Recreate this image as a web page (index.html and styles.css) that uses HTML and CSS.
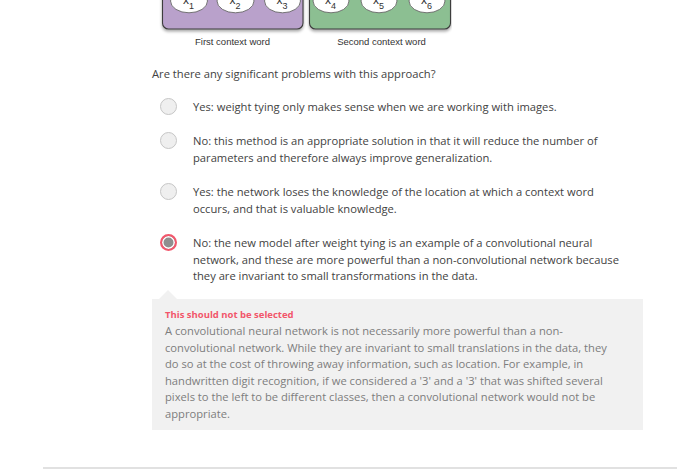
FILE: index.html
```html
<!DOCTYPE html>
<html>
<head>
<meta charset="utf-8">
<link rel="stylesheet" href="styles.css">
</head>
<body>
<div class="page">
  <div class="col">
    <svg class="diagram" width="300" height="50" viewBox="152 0 300 50" xmlns="http://www.w3.org/2000/svg">
      <defs>
        <filter id="sh" x="-10%" y="-20%" width="120%" height="160%">
          <feDropShadow dx="0" dy="2" stdDeviation="1.6" flood-color="#000" flood-opacity="0.35"/>
        </filter>
      </defs>
      <g filter="url(#sh)">
        <rect x="162.5" y="-30" width="140.5" height="59" rx="6" fill="#b9a1cb" stroke="#3d3d3d" stroke-width="1.1"/>
        <rect x="309.5" y="-30" width="141" height="59" rx="6" fill="#8cbf92" stroke="#3d3d3d" stroke-width="1.1"/>
      </g>
      <g fill="#fff" stroke="#666" stroke-width="0.9">
        <ellipse cx="189" cy="1" rx="18.5" ry="11.8"/>
        <ellipse cx="235.5" cy="1" rx="18.5" ry="11.8"/>
        <ellipse cx="282.5" cy="1" rx="18" ry="11.8"/>
        <ellipse cx="331" cy="1" rx="18" ry="11.8"/>
        <ellipse cx="379" cy="1" rx="18" ry="11.8"/>
        <ellipse cx="427" cy="1" rx="18" ry="11.8"/>
      </g>
      <g class="xs" fill="#333">
        <text x="183" y="4">x<tspan dy="5" font-size="9">1</tspan></text>
        <text x="229.5" y="4">x<tspan dy="5" font-size="9">2</tspan></text>
        <text x="276.5" y="4">x<tspan dy="5" font-size="9">3</tspan></text>
        <text x="325" y="4">x<tspan dy="5" font-size="9">4</tspan></text>
        <text x="373" y="4">x<tspan dy="5" font-size="9">5</tspan></text>
        <text x="421" y="4">x<tspan dy="5" font-size="9">6</tspan></text>
      </g>
      <g class="cap" fill="#333" text-anchor="middle">
        <text x="232.5" y="45">First context word</text>
        <text x="381.5" y="45">Second context word</text>
      </g>
    </svg>

    <p class="question">Are there any significant problems with this approach?</p>

    <ul class="options">
      <li class="option"><span class="radio"></span><span class="label">Yes: weight tying only makes sense when we are working with images.</span></li>
      <li class="option"><span class="radio"></span><span class="label">No: this method is an appropriate solution in that it will reduce the number of parameters and therefore always improve generalization.</span></li>
      <li class="option"><span class="radio"></span><span class="label">Yes: the network loses the knowledge of the location at which a context word occurs, and that is valuable knowledge.</span></li>
      <li class="option"><span class="radio radio-wrong"></span><span class="label">No: the new model after weight tying is an example of a convolutional neural network, and these are more powerful than a non-convolutional network because they are invariant to small transformations in the data.</span></li>
    </ul>

    <div class="feedback">
      <div class="fb-title">This should not be selected</div>
      <p class="fb-text">A convolutional neural network is not necessarily more powerful than a non-convolutional network. While they are invariant to small translations in the data, they do so at the cost of throwing away information, such as location. For example, in handwritten digit recognition, if we considered a '3' and a '3' that was shifted several pixels to the left to be different classes, then a convolutional network would not be appropriate.</p>
    </div>
  </div>
  <div class="rule"></div>
</div>
</body>
</html>
```

FILE: styles.css
```css
html, body {
  margin: 0;
  padding: 0;
  background: #fff;
}
body {
  font-family: "Open Sans", "Liberation Sans", sans-serif;
  font-size: 11.2px;
  line-height: 16.5px;
  color: #424242;
  overflow: hidden;
}
.page {
  width: 677px;
  height: 472px;
}
.col {
  margin-left: 152px;
  width: 491px;
}
.diagram {
  display: block;
}
.xs text {
  font-family: "Liberation Sans", Arial, sans-serif;
  font-size: 12px;
}
.cap text {
  font-family: "Liberation Sans", Arial, sans-serif;
  font-size: 9.5px;
}
.question {
  margin: 16px 0 0;
}
.options {
  list-style: none;
  margin: 16px 0 0;
  padding: 0 0 0 8px;
  display: flex;
  flex-direction: column;
  gap: 18px;
}
.option {
  display: flex;
  align-items: flex-start;
  gap: 16px;
}
.radio {
  flex: none;
  box-sizing: border-box;
  width: 17px;
  height: 17px;
  border-radius: 50%;
  border: 1px solid #c6c6c6;
  background: #efefef;
  margin-top: -1px;
}
.radio-wrong {
  border: 2px solid #f2576c;
  background: #8f8f8f;
  box-shadow: inset 0 0 0 1.5px #fff;
}
.label {
  flex: 1;
  padding-right: 12px;
}
.feedback {
  position: relative;
  margin-top: 14px;
  background: #f1f1f1;
  padding: 8px 28px 8px 13px;
}
.feedback::before {
  content: "";
  position: absolute;
  top: -9px;
  left: 7px;
  border-left: 9px solid transparent;
  border-right: 9px solid transparent;
  border-bottom: 9px solid #f1f1f1;
}
.fb-title {
  font-weight: bold;
  font-size: 9.5px;
  color: #f2566b;
}
.fb-text {
  margin: 0;
  color: #7d7d7d;
}
.rule {
  margin: 37px 0 0 43px;
  height: 2px;
  background: #e1e1e1;
}
```
